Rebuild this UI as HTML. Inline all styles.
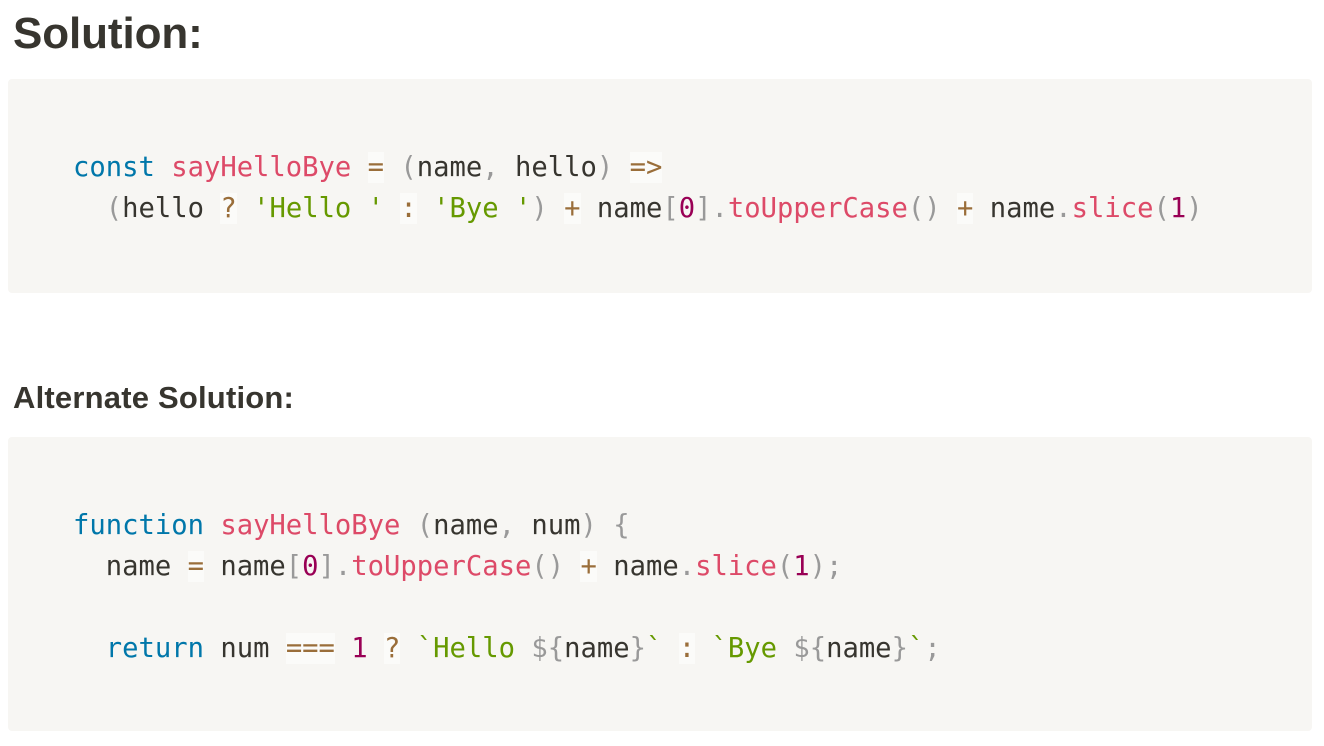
<!DOCTYPE html>
<html><head><meta charset="utf-8"><style>
html,body{margin:0;padding:0;background:#fff;width:1324px;height:746px;overflow:hidden}
h1,h3{position:absolute;margin:0;font-family:"Liberation Sans",sans-serif;font-weight:bold;color:#37352f;white-space:nowrap}
h1{left:13px;top:9px;font-size:44px;line-height:50px;letter-spacing:-0.1px}
h3{left:13px;top:380px;font-size:31px;line-height:36px;letter-spacing:0.2px}
.blk{position:absolute;left:8px;width:1304px;background:#f7f6f3;border-radius:4px}
pre{position:absolute;left:65px;margin:0;font-family:"DejaVu Sans Mono","Liberation Mono",monospace;font-size:27.2px;line-height:41px;color:#37352f;white-space:pre}
.k{color:#07a}.f{color:#dd4a68}.p{color:#999}.o{color:#9a6e3a;background:rgba(255,255,255,.5)}.s{color:#690}.n{color:#905}
</style></head><body>
<h1>Solution:</h1>
<div class="blk" style="top:79px;height:214px">
<pre style="top:68px"><span class="k">const</span> <span class="f">sayHelloBye</span> <span class="o">=</span> <span class="p">(</span>name<span class="p">,</span> hello<span class="p">)</span> <span class="o">=&gt;</span>
  <span class="p">(</span>hello <span class="o">?</span> <span class="s">'Hello '</span> <span class="o">:</span> <span class="s">'Bye '</span><span class="p">)</span> <span class="o">+</span> name<span class="p">[</span><span class="n">0</span><span class="p">]</span><span class="p">.</span><span class="f">toUpperCase</span><span class="p">(</span><span class="p">)</span> <span class="o">+</span> name<span class="p">.</span><span class="f">slice</span><span class="p">(</span><span class="n">1</span><span class="p">)</span></pre>
</div>
<h3>Alternate Solution:</h3>
<div class="blk" style="top:437px;height:294px">
<pre style="top:68px"><span class="k">function</span> <span class="f">sayHelloBye</span> <span class="p">(</span>name<span class="p">,</span> num<span class="p">)</span> <span class="p">{</span>
  name <span class="o">=</span> name<span class="p">[</span><span class="n">0</span><span class="p">]</span><span class="p">.</span><span class="f">toUpperCase</span><span class="p">(</span><span class="p">)</span> <span class="o">+</span> name<span class="p">.</span><span class="f">slice</span><span class="p">(</span><span class="n">1</span><span class="p">)</span><span class="p">;</span>

  <span class="k">return</span> num <span class="o">===</span> <span class="n">1</span> <span class="o">?</span> <span class="s">`Hello </span><span class="p">${</span>name<span class="p">}</span><span class="s">`</span> <span class="o">:</span> <span class="s">`Bye </span><span class="p">${</span>name<span class="p">}</span><span class="s">`</span><span class="p">;</span></pre>
</div>
</body></html>
